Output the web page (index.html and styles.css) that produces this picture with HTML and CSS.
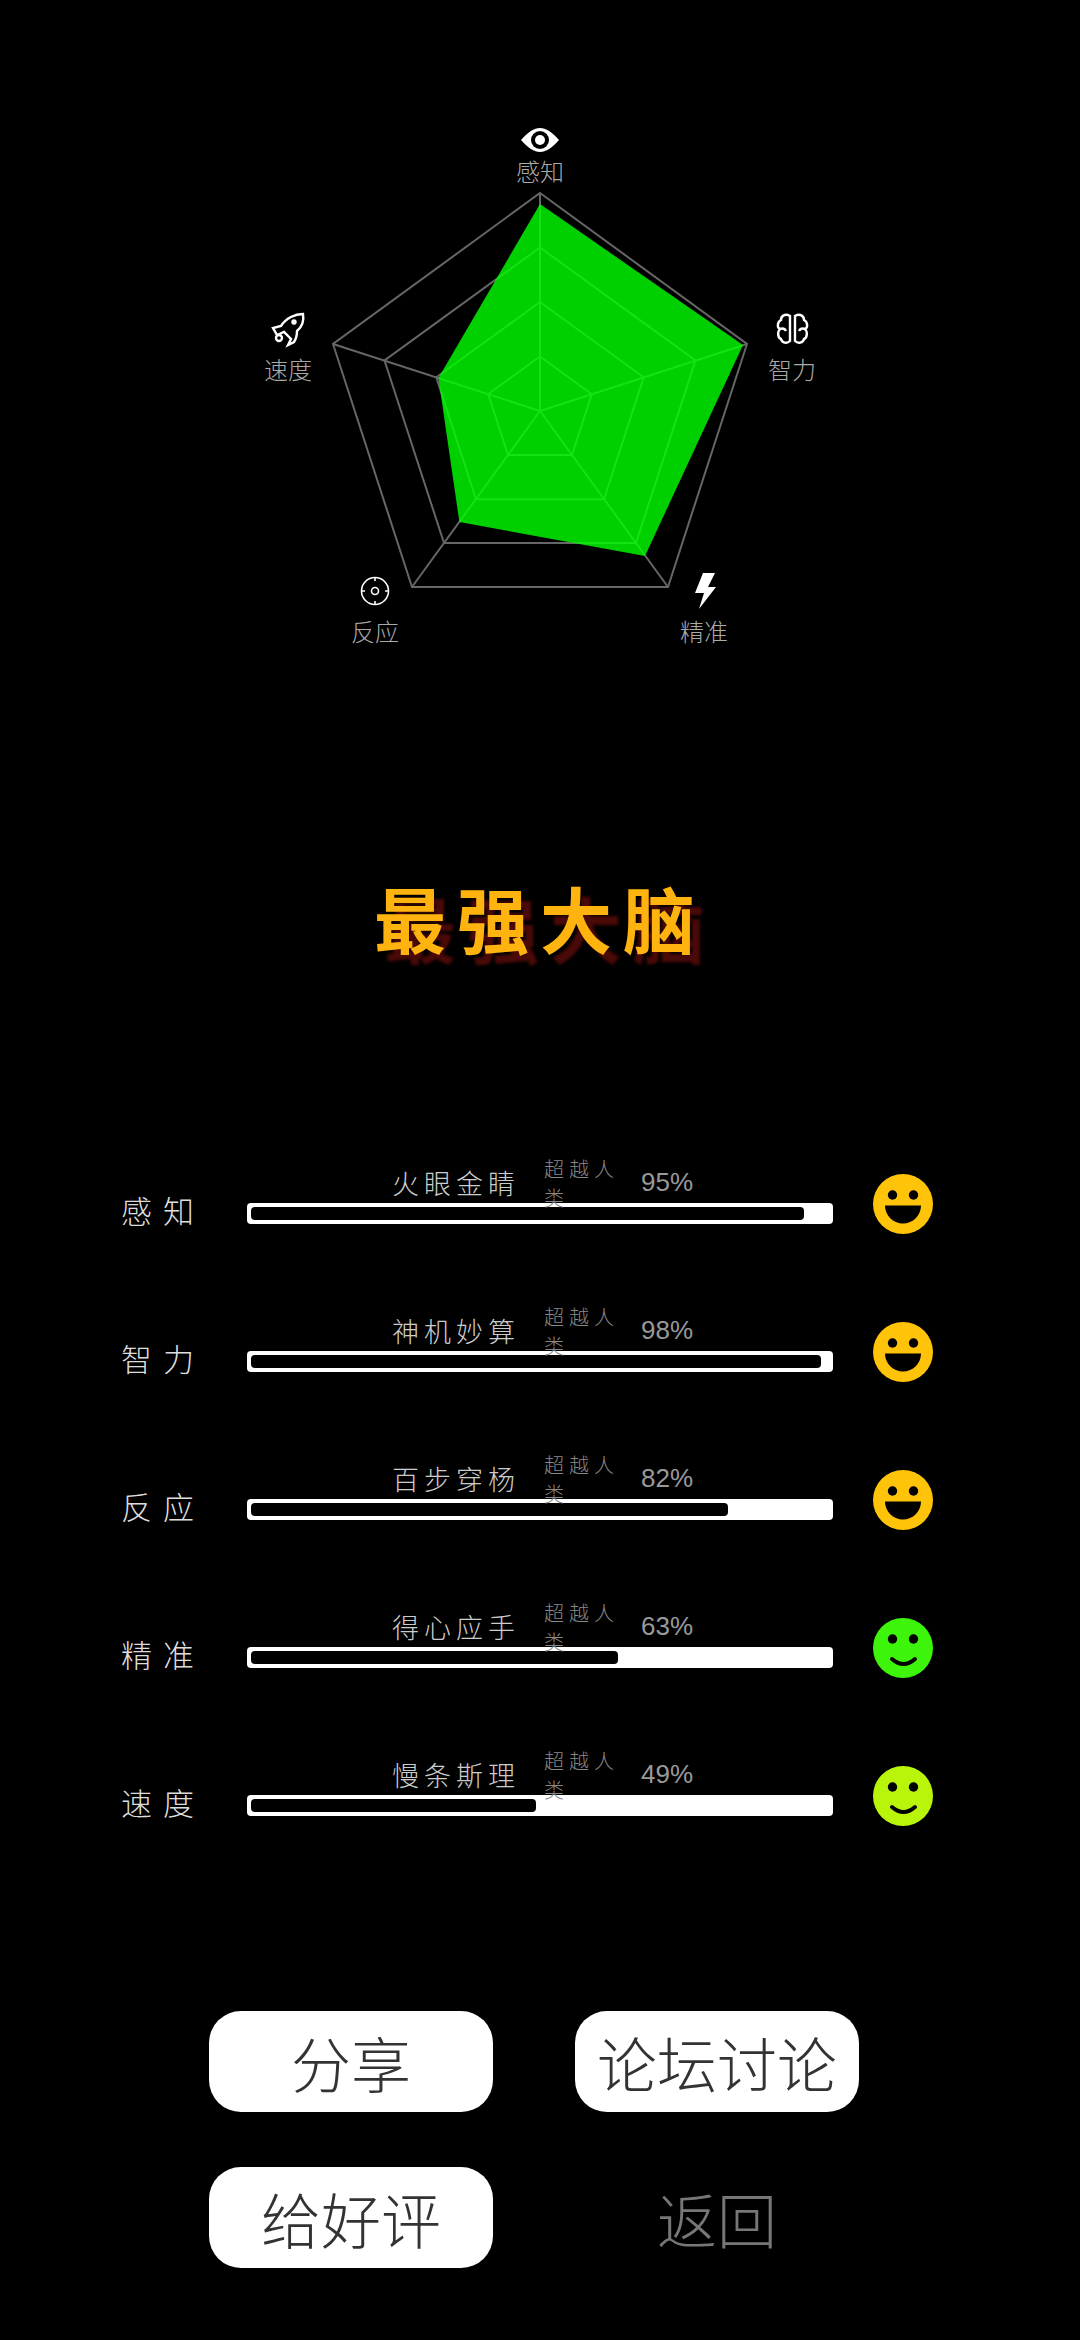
FILE: index.html
```html
<!DOCTYPE html>
<html lang="zh-CN">
<head>
    <meta charset="UTF-8">
    <meta name="viewport" content="width=device-width, initial-scale=1.0">
    <title>最强大脑</title>
    <link rel="stylesheet" href="styles.css">
</head>
<body>
    <div class="page">
        <svg class="radar" viewBox="0 0 1080 660" width="1080" height="660">
            <!-- rings: 25/50/75/100 of R=218, center 540,411 -->
            <g class="grid">
                <polygon points="540,193 747,344 668,587 412,587 333,344"/>
                <polygon points="540,247.5 695.5,360.5 636,543 444,543 384.5,360.5"/>
                <polygon points="540,302 643.7,377.3 604,499.2 476,499.2 436.3,377.3"/>
                <polygon points="540,356.5 591.8,394.2 572,455.1 508,455.1 488.2,394.2"/>
                <path d="M540 411V193M540 411L747 344M540 411L668 587M540 411L412 587M540 411L333 344"/>
            </g>
            <polygon class="area" points="540,204 743,345 645,556 459.4,522 438.4,378"/>

            <!-- eye -->
            <path class="ico" d="M521 140C528 132 534 128 540 128S552 132 559 140C552 148 546 152 540 152S528 148 521 140Z"/>
            <circle cx="540" cy="140" r="9" fill="#000"/>
            <circle cx="540" cy="140" r="5" fill="#fff"/>

            <!-- brain -->
            <g class="line">
                <path d="M790 316C785 313 781 316 781 320C777 322 777 328 780 329C777 332 778 338 781 339C782 343 787 344 790 341Z"/>
                <path d="M795 316C800 313 804 316 804 320C808 322 808 328 805 329C808 332 807 338 804 339C803 343 798 344 795 341Z"/>
                <path d="M780 329C783 328 785 329 786 331M805 329C802 328 800 329 799 331"/>
            </g>

            <!-- rocket -->
            <g class="line">
                <path d="M303 314C295 314 286 318 281 326L273 328L277 335L284 332L291 339L288 345L294 342C296 339 297 336 297 331C303 326 304 320 303 314Z"/>
                <circle cx="294" cy="322" r="1.5"/>
                <circle cx="279" cy="338" r="3"/>
            </g>

            <!-- target -->
            <g class="thin">
                <circle cx="375" cy="591" r="13.5"/>
                <circle cx="375" cy="591" r="3.5"/>
                <path d="M375 577V581M375 601V605M361 591H365M385 591H389"/>
            </g>

            <!-- bolt -->
            <path class="ico" d="M703 573H715L708 587H716L699 609L704 593H695Z"/>

            <text class="axis" x="540" y="181">感知</text>
            <text class="axis" x="792" y="379">智力</text>
            <text class="axis" x="704" y="641">精准</text>
            <text class="axis" x="375" y="641">反应</text>
            <text class="axis" x="288" y="379">速度</text>
        </svg>

        <h1 class="title">最强大脑</h1>

        <div class="rows">
            <div class="row">
                <div class="name">感知</div>
                <div class="mid">
                    <div class="cap"><span class="word">火眼金睛</span><span class="beat">超越人类</span><span class="pct">95%</span></div>
                    <div class="bar"><div class="fill" style="width:95%"></div></div>
                </div>
                <svg class="face" viewBox="0 0 60 60"><circle class="gold" cx="30" cy="30" r="30"/><circle cx="19.5" cy="21" r="4.7"/><circle cx="40.5" cy="21" r="4.7"/><path d="M12 31.5H48C48 41.5 40 49.5 30 49.5S12 41.5 12 31.5Z"/></svg>
            </div>
            <div class="row">
                <div class="name">智力</div>
                <div class="mid">
                    <div class="cap"><span class="word">神机妙算</span><span class="beat">超越人类</span><span class="pct">98%</span></div>
                    <div class="bar"><div class="fill" style="width:98%"></div></div>
                </div>
                <svg class="face" viewBox="0 0 60 60"><circle class="gold" cx="30" cy="30" r="30"/><circle cx="19.5" cy="21" r="4.7"/><circle cx="40.5" cy="21" r="4.7"/><path d="M12 31.5H48C48 41.5 40 49.5 30 49.5S12 41.5 12 31.5Z"/></svg>
            </div>
            <div class="row">
                <div class="name">反应</div>
                <div class="mid">
                    <div class="cap"><span class="word">百步穿杨</span><span class="beat">超越人类</span><span class="pct">82%</span></div>
                    <div class="bar"><div class="fill" style="width:82%"></div></div>
                </div>
                <svg class="face" viewBox="0 0 60 60"><circle class="gold" cx="30" cy="30" r="30"/><circle cx="19.5" cy="21" r="4.7"/><circle cx="40.5" cy="21" r="4.7"/><path d="M12 31.5H48C48 41.5 40 49.5 30 49.5S12 41.5 12 31.5Z"/></svg>
            </div>
            <div class="row">
                <div class="name">精准</div>
                <div class="mid">
                    <div class="cap"><span class="word">得心应手</span><span class="beat">超越人类</span><span class="pct">63%</span></div>
                    <div class="bar"><div class="fill" style="width:63%"></div></div>
                </div>
                <svg class="face" viewBox="0 0 60 60"><circle class="green" cx="30" cy="30" r="30"/><circle cx="19.5" cy="21" r="4.7"/><circle cx="40.5" cy="21" r="4.7"/><path class="smile" d="M19 41Q30.500 51 42 41"/></svg>
            </div>
            <div class="row">
                <div class="name">速度</div>
                <div class="mid">
                    <div class="cap"><span class="word">慢条斯理</span><span class="beat">超越人类</span><span class="pct">49%</span></div>
                    <div class="bar"><div class="fill" style="width:49%"></div></div>
                </div>
                <svg class="face" viewBox="0 0 60 60"><circle class="lime" cx="30" cy="30" r="30"/><circle cx="19.5" cy="21" r="4.7"/><circle cx="40.5" cy="21" r="4.7"/><path class="smile" d="M19 41Q30.500 51 42 41"/></svg>
            </div>
        </div>

        <div class="btns">
            <div class="btn">分享</div>
            <div class="btn">论坛讨论</div>
            <div class="btn">给好评</div>
            <div class="btn back">返回</div>
        </div>
    </div>
</body>
</html>
```

FILE: styles.css
```css
*{
    margin: 0;
    padding: 0;
}
body{
    background: #000;
    font-family: "Noto Sans CJK SC", "Noto Sans", sans-serif;
}
.page{
    width: 1080px;
    height: 2340px;
    overflow: hidden;
    background: #000;
}
.radar{
    display: block;
}
.grid polygon,.grid path{
    fill: none;
    stroke: #666;
    stroke-width: 2;
}
.area{
    fill: #0f0;
    fill-opacity: 0.81;
}
.ico{
    fill: #fff;
}
.line,.thin{
    fill: none;
    stroke: #fff;
    stroke-width: 2.4;
}
.thin{
    stroke-width: 1.6;
}
.axis{
    fill: #aaa;
    font-size: 24px;
    font-weight: 300;
    text-anchor: middle;
}
.title{
    margin-top: 207px;
    height: 100px;
    font-size: 72px;
    line-height: 100px;
    font-weight: 700;
    letter-spacing: 11px;
    text-align: center;
    color: #ffb30f;
    text-shadow: 10px 10px 3px #4a0a08;
}
.rows{
    margin-top: 195px;
}
.row{
    display: flex;
    align-items: flex-start;
    height: 148px;
    padding-left: 121px;
}
.name{
    width: 126px;
    padding-top: 24px;
    font-size: 31px;
    line-height: 48px;
    font-weight: 300;
    letter-spacing: 11px;
    color: #ddd;
}
.mid{
    width: 586px;
}
.cap{
    display: flex;
    align-items: center;
    height: 41px;
    padding-left: 145px;
}
.word{
    width: 152px;
    font-size: 27px;
    font-weight: 300;
    letter-spacing: 5px;
    color: #ccc;
}
.beat{
    width: 97px;
    font-size: 20px;
    font-weight: 300;
    letter-spacing: 5px;
    color: #888;
}
.pct{
    font-family: "Liberation Sans", sans-serif;
    font-size: 26px;
    color: #999;
}
.bar{
    box-sizing: border-box;
    width: 586px;
    height: 21px;
    padding: 4px 0 4px 4px;
    background: #fff;
    border-radius: 4px;
}
.fill{
    height: 13px;
    background: #000;
    border-radius: 4px;
}
.face{
    width: 60px;
    height: 60px;
    margin-top: 12px;
    margin-left: 40px;
}
.gold{
    fill: #ffc30a;
}
.green{
    fill: #3cf50a;
}
.lime{
    fill: #b8f50a;
}
.smile{
    fill: none;
    stroke: #000;
    stroke-width: 4;
    stroke-linecap: round;
}
.btns{
    display: grid;
    grid-template-columns: 284px 284px;
    column-gap: 82px;
    row-gap: 55px;
    margin-top: 109px;
    padding-left: 209px;
}
.btn{
    height: 101px;
    line-height: 101px;
    text-align: center;
    font-size: 60px;
    font-weight: 300;
    color: #333;
    background: #fff;
    border-radius: 32px;
}
.back{
    color: #777;
    background: none;
}
```
